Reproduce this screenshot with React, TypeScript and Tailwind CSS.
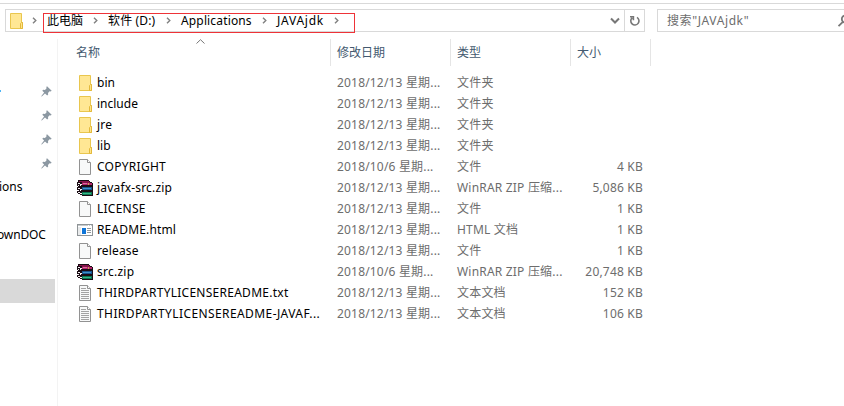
import React from "react";

type Kind = "folder" | "file" | "rar" | "html" | "text";

interface Entry {
  kind: Kind;
  name: string;
  date: string;
  type: string;
  size?: string;
  tracking?: string;
}

const D13 = "2018/12/13 星期...";
const D6 = "2018/10/6 星期...";

const entries: Entry[] = [
  { kind: "folder", name: "bin", date: D13, type: "文件夹" },
  { kind: "folder", name: "include", date: D13, type: "文件夹" },
  { kind: "folder", name: "jre", date: D13, type: "文件夹", tracking: "tracking-[0.2px]" },
  { kind: "folder", name: "lib", date: D13, type: "文件夹" },
  { kind: "file", name: "COPYRIGHT", date: D6, type: "文件", size: "4 KB", tracking: "tracking-[0.27px]" },
  { kind: "rar", name: "javafx-src.zip", date: D13, type: "WinRAR ZIP 压缩...", size: "5,086 KB", tracking: "tracking-[0.18px]" },
  { kind: "file", name: "LICENSE", date: D13, type: "文件", size: "1 KB", tracking: "tracking-[0.25px]" },
  { kind: "html", name: "README.html", date: D13, type: "HTML 文档", size: "1 KB", tracking: "tracking-[0.15px]" },
  { kind: "file", name: "release", date: D13, type: "文件", size: "1 KB", tracking: "tracking-[0.15px]" },
  { kind: "rar", name: "src.zip", date: D6, type: "WinRAR ZIP 压缩...", size: "20,748 KB", tracking: "tracking-[0.25px]" },
  { kind: "text", name: "THIRDPARTYLICENSEREADME.txt", date: D13, type: "文本文档", size: "152 KB", tracking: "tracking-[0.26px]" },
  { kind: "text", name: "THIRDPARTYLICENSEREADME-JAVAF...", date: D13, type: "文本文档", size: "106 KB", tracking: "tracking-[0.41px]" },
];

function FolderIcon() {
  return (
    <svg width="16" height="16" viewBox="0 0 16 16" className="shrink-0">
      <path d="M2.5 .5h11v9h1v6h-12z" fill="#ffe794" stroke="#e9c64e" />
      <path d="M12.5 15V10.5l1-1h1v6h-2z" fill="#ffe48a" stroke="#e3b93b" />
    </svg>
  );
}

function PageIcon({ lines }: { lines?: boolean }) {
  return (
    <svg width="16" height="16" viewBox="0 0 16 16" className="shrink-0">
      <path d="M2.5 .5h8l3 3v12h-11z" fill="#f8f9f9" stroke="#929292" />
      <path d="M10.5 .5v3h3" fill="#fff" stroke="#929292" />
      {lines && <path d="M4 3.5h5M4 5.5h8M4 7.5h8M4 9.5h8M4 11.5h8M4 13.5h8" stroke="#a3a3a3" />}
    </svg>
  );
}

function HtmlIcon() {
  return (
    <svg width="16" height="16" viewBox="0 0 16 16" className="shrink-0" shapeRendering="crispEdges">
      <path d="M.5 2.5h15v11H.5z" fill="#fff" stroke="#8f9497" />
      <path d="M1 3h14v1H1z" fill="#c6cacc" />
      <path d="M1 5h3v8H1z" fill="#e9ebec" />
      <path d="M5 6h4v6H5z" fill="#0f75d8" />
      <path d="M10 6.5h4M10 8.5h4M10 10.5h4" stroke="#90979b" />
      <path d="M11 3h1v1h-1zM13 3h1v1h-1z" fill="#fff" />
    </svg>
  );
}

/* Archive icon: three stacked books, covers on top and page edges at the left. */
function RarIcon() {
  return (
    <svg width="16" height="16" viewBox="0 0 16 16" className="shrink-0" shapeRendering="crispEdges">
      <path d="M1 0h11v1h1v1h2v1h1v13H5v-1H3v-1H1v-1H0v-2h1v-1H0V7h1V6H0V2h1z" fill="#1a0d14" />
      <path d="M2 1h10v1h1v1H5V2H2z" fill="#86134a" />
      <path d="M5 3h10v2H5z" fill="#b5256c" />
      <path d="M6 3h4v1H6z" fill="#dc6b9f" />
      <path d="M1 3h2v1h2v1H3V4H1zM1 5h1v1H1zM3 5h1v1H3z" fill="#f4eef0" />
      <path d="M5 7h10v3H5z" fill="#17568f" />
      <path d="M6 8h8v1H6z" fill="#3e91c8" />
      <path d="M1 8h2v1h2v1H3V9H1zM1 10h1v1H1zM3 10h1v1H3z" fill="#f4eef0" />
      <path d="M5 12h10v3H5z" fill="#0b7850" />
      <path d="M6 13h8v1H6z" fill="#36b587" />
      <path d="M1 12h2v1h2v1H3v-1H1z" fill="#f4eef0" />
      <path d="M11 3h1v2h-1z" fill="#c9a64e" />
    </svg>
  );
}

function EntryIcon({ kind }: { kind: Kind }) {
  if (kind === "folder") return <FolderIcon />;
  if (kind === "rar") return <RarIcon />;
  if (kind === "html") return <HtmlIcon />;
  return <PageIcon lines={kind === "text"} />;
}

function Pin() {
  return (
    <svg width="11" height="11" viewBox="0 0 11 11" fill="#8c98a2">
      <path d="M6 .3 10.7 4.8 9.6 5.6 8.6 5.3 7 7.1 7.2 8.6 6.2 9.5 4 7.4.8 10.4.2 10.2 3.1 6.5 1.3 4.7 2.2 3.8 4 3.9 5.6 2.3 5.3 1.1z" />
    </svg>
  );
}

function Crumb() {
  return (
    <svg width="5" height="7" viewBox="0 0 5 7" fill="none" stroke="#808080" strokeWidth="1.4">
      <path d="M1 .8 3.8 3.5 1 6.2" />
    </svg>
  );
}

function AddressBar() {
  return (
    <div className="flex h-[23px] w-[640px] shrink-0 border border-[#d9d9d9]">
      <div className="flex w-[608px] shrink-0 items-center pl-[2px] text-black">
        <FolderIcon />
        <span className="ml-[8px] flex w-[15px]"><Crumb /></span>
        <span className="w-[46px]">此电脑</span>
        <span className="flex w-[15px]"><Crumb /></span>
        <span className="w-[58px] tracking-[0.15px]">软件 (D:)</span>
        <span className="flex w-[15px]"><Crumb /></span>
        <span className="w-[81px] tracking-[0.15px]">Applications</span>
        <span className="flex w-[15px]"><Crumb /></span>
        <span className="w-[57px] tracking-[0.75px]">JAVAjdk</span>
        <Crumb />
      </div>
      <svg width="10" height="21" viewBox="0 0 10 21" fill="none" stroke="#777" strokeWidth="2" className="-ml-[4px] shrink-0">
        <path d="M1 8.5 5 12.5 9 8.5" />
      </svg>
      <div className="ml-[4px] flex flex-1 items-center justify-center border-l border-[#d9d9d9]">
        <svg width="12" height="12" viewBox="0 0 12 12" fill="none" stroke="#777" strokeWidth="1.6">
          <path d="M8 2.4A4.1 4.1 0 1 1 3.2 2.8M1 1.8h3.4v3.4" />
        </svg>
      </div>
    </div>
  );
}

export default function App() {
  return (
    <div className="relative flex h-[406px] w-[844px] flex-col overflow-hidden bg-white font-['Noto_Sans','Noto_Sans_CJK_SC',sans-serif] text-[12px] leading-[20px] whitespace-nowrap">
      <div className="mt-[3px] h-px shrink-0 bg-[#d9d9d9]" />
      <div className="mt-[5px] flex shrink-0 pl-[5px]">
        <AddressBar />
        <div className="ml-[12px] flex h-[23px] w-[200px] shrink-0 items-center border border-[#d9d9d9] pl-[9px] text-[#6d6d6d]">
          <span className="w-[170px] shrink-0 tracking-[0.6px]">搜索"JAVAjdk"</span>
          <svg width="13" height="13" viewBox="0 0 13 13" fill="none" stroke="#777" strokeWidth="1.8" className="shrink-0">
            <circle cx="8.5" cy="5" r="3.7" />
            <path d="M5.9 7.8 1.5 12.2" />
          </svg>
        </div>
      </div>
      <div className="mt-[7px] flex flex-1">
        <aside className="flex w-[57px] shrink-0 flex-col pt-[40px]">
          {[0, 1, 2, 3].map((i) => (
            <div key={i} className="flex h-[24px] items-center pl-[41px]">
              {i === 0 && <i className="-ml-[41px] mr-[40px] h-[2px] w-px bg-[#4db5f5]" />}
              <Pin />
            </div>
          ))}
          <div className="-ml-px h-[24px] leading-[24px]">ions</div>
          <div className="h-[24px]" />
          <div className="-ml-[3px] h-[24px] leading-[24px] tracking-[-0.15px]">ownDOC</div>
          <div className="mt-[32px] h-[24px] w-[55px] bg-[#d9d9d9]" />
        </aside>
        <main className="flex-1 border-l border-[#f3f3f3]">
          <div className="flex h-[27px] items-center text-[#43596f]">
            <div className="relative flex h-full w-[273px] items-center border-r border-[#e5e5e5] pl-[18px]">
              名称
              <svg width="9" height="5" viewBox="0 0 9 5" fill="none" stroke="#777" className="absolute top-0 left-[138px]">
                <path d="M.5 4.5 4.5 .7 8.5 4.5" />
              </svg>
            </div>
            <div className="flex h-full w-[120px] items-center border-r border-[#e5e5e5] pl-[6px]">修改日期</div>
            <div className="flex h-full w-[120px] items-center border-r border-[#e5e5e5] pl-[6px]">类型</div>
            <div className="flex h-full w-[80px] items-center border-r border-[#e5e5e5] pl-[6px]">大小</div>
          </div>
          <div className="pt-[6px]">
            {entries.map((e) => (
              <div key={e.name} className="flex h-[21px] items-center pl-[19px] text-[#6d6d6d]">
                <EntryIcon kind={e.kind} />
                <span className={`ml-[4px] w-[240px] text-black ${e.tracking ?? ""}`}>{e.name}</span>
                <span className="w-[120px] tracking-[0.18px]">{e.date}</span>
                <span className="w-[120px] tracking-[0.2px]">{e.type}</span>
                <span className="w-[66px] text-right tracking-[0.2px]">{e.size}</span>
              </div>
            ))}
          </div>
        </main>
      </div>
      <div className="absolute top-[13px] left-[43px] h-[20px] w-[312px] border border-[#ee3338]" />
    </div>
  );
}
